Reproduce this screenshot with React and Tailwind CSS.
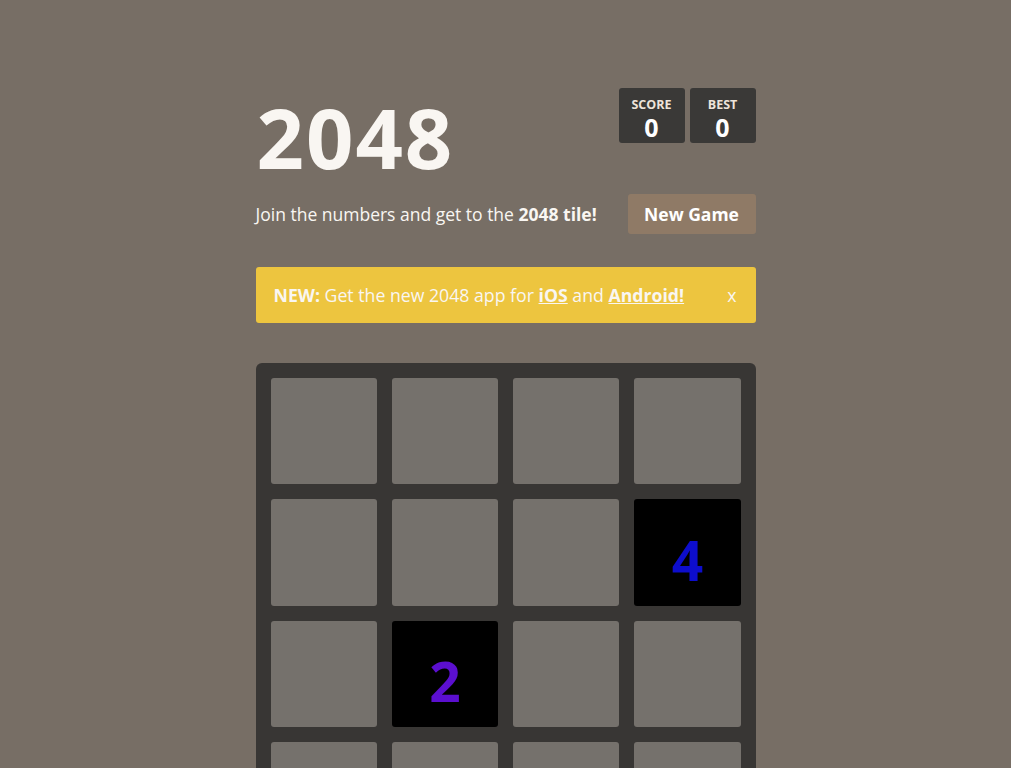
import React from 'react';

const board = [
  [0, 0, 0, 0],
  [0, 0, 0, 4],
  [0, 2, 0, 0],
  [0, 0, 0, 0],
];

const tileColor = {
  2: 'text-[#5b0fcf]',
  4: 'text-[#0d0dcc]',
};

const ScoreBox = ({ label, value }) => (
  <div className="w-[66px] h-[55px] bg-[#3a3937] rounded-[3px] flex flex-col items-center pt-[10px]">
    <div className="text-[12.5px] leading-[13px] font-bold uppercase text-[#eee4da]">{label}</div>
    <div className="text-[25px] leading-[28px] mt-[2px] font-bold text-white">{value}</div>
  </div>
);

const App = () => {
  return (
    <div className="min-h-screen bg-white">
      <div className="mr-[13px] bg-[#776e65] pt-[80px] pb-[80px] font-['Open_Sans',sans-serif] text-[#f9f6f2]">
        <div className="w-[500px] mx-auto">
          {/* Heading */}
          <div className="flex justify-between items-start h-[100px]">
            <h1 className="text-[83px] leading-[100px] mt-[7px] font-bold tracking-[2px] ml-[1px]">2048</h1>
            <div className="flex gap-[5px] mt-[8px]">
              <ScoreBox label="Score" value="0" />
              <ScoreBox label="Best" value="0" />
            </div>
          </div>

          {/* Above game */}
          <div className="flex items-center justify-between mt-[14px]">
            <p className="text-[17.5px] leading-[24px]">
              Join the numbers and get to the <strong className="font-bold">2048 tile!</strong>
            </p>
            <button className="w-[128px] h-[40px] bg-[#8f7a66] rounded-[3px] text-white font-bold text-[17.5px]">
              New Game
            </button>
          </div>

          {/* App banner */}
          <div className="mt-[33px] h-[56px] bg-[#edc53f] rounded-[3px] flex items-center justify-between pl-[18px] pr-[18px] text-[17.7px] text-[#f9f6f2]">
            <p>
              <strong className="font-bold">NEW:</strong> Get the new 2048 app for{' '}
              <a className="font-bold underline">iOS</a> and <a className="font-bold underline">Android!</a>
            </p>
            <span className="mr-[1px]">x</span>
          </div>

          {/* Board */}
          <div className="mt-[40px] w-[500px] h-[500px] bg-[#383634] rounded-[6px] p-[15px] grid grid-cols-4 grid-rows-4 gap-[15px]">
            {board.flat().map((v, i) => (
              <div
                key={i}
                className={`rounded-[3px] flex items-center justify-center ${v ? 'bg-black' : 'bg-[#75716c]'}`}
              >
                {v ? (
                  <span className={`text-[55px] font-bold leading-none mt-[14px] ${tileColor[v]}`}>{v}</span>
                ) : null}
              </div>
            ))}
          </div>
        </div>
      </div>
    </div>
  );
};

export default App;
